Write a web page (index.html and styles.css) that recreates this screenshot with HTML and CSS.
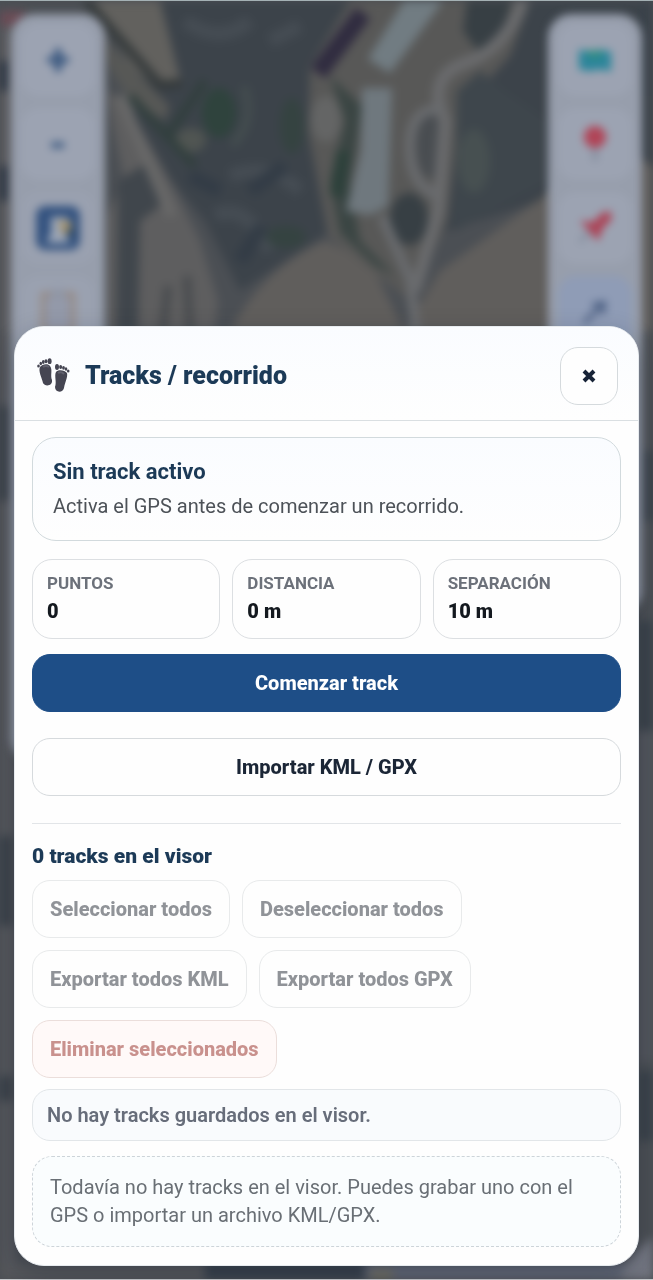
FILE: index.html
```html
<!DOCTYPE html>
<html lang="es">
<head>
<meta charset="utf-8">
<meta name="viewport" content="width=device-width, initial-scale=1">
<title>Tracks / recorrido</title>
<link rel="stylesheet" href="styles.css">
</head>
<body>
<div class="viewer" aria-hidden="true">
  <svg class="map" viewBox="0 0 653 1280" preserveAspectRatio="xMidYMin slice">
    <rect width="653" height="1280" fill="#4b4f54"/>
    <path d="M160 0H653V220L540 200 430 235 410 290 330 230 240 290 205 220 130 130Z" fill="#3c434a"/>
    <path d="M0 20H20V330H0Z" fill="#5b5c60"/>
    <path d="M0 10H25V25H0Z" fill="#6b4c56"/>
    <path d="M0 60H10V90H0ZM0 165H10V200H0Z" fill="#303947"/>
    <path d="M95 0H160L180 78 160 88 130 65Z" fill="#62615e"/>
    <path d="M86 0L160 84 182 82" fill="none" stroke="#353a3b" stroke-width="9"/>
    <path d="M95 30L170 105 165 120 130 98 105 60Z" fill="#575856"/>
    <path d="M105 90L125 100 165 170 200 240 218 300 215 330H105V215L125 180Z" fill="#5e5e5f"/>
    <path d="M118 180L150 160 160 205 140 220 138 330H116Z" fill="#40464c"/>
    <path d="M163 330L168 285M190 330L187 275" stroke="#484b4e" stroke-width="8"/>
    <path d="M185 20Q220 45 250 20M270 40L300 25M230 175Q270 160 300 190M215 215Q245 200 270 250" fill="none" stroke="#454c53" stroke-width="14"/>
    <path d="M190 175L220 190M250 190L285 165M240 260L262 225" stroke="#333c46" stroke-width="14"/>
    <ellipse cx="219" cy="112" rx="17" ry="25" fill="#2f433d"/>
    <ellipse cx="191" cy="139" rx="15" ry="12" fill="#505552"/>
    <path d="M205 80L170 132M130 95L195 165" stroke="#313f3d" stroke-width="8"/>
    <path d="M244 85Q256 122 232 144" fill="none" stroke="#454f50" stroke-width="7"/>
    <ellipse cx="292" cy="125" rx="12" ry="28" fill="#354341"/>
    <ellipse cx="286" cy="236" rx="20" ry="11" fill="#354341"/>
    <path d="M230 330Q265 265 325 240L370 260 404 330Z" fill="#605e5c"/>
    <path d="M404 330L440 270 540 198 620 150 653 165V330Z" fill="#605e5c"/>
    <path d="M350 0L310 65 308 130 328 235 410 300 448 220 460 110 510 55 530 0Z" fill="#585857"/>
    <path d="M330 75L362 105 350 185 360 240 395 275 375 265 340 232 330 180 345 120Z" fill="#3a4543"/>
    <path d="M343 150L336 195" stroke="#2c403a" stroke-width="13"/>
    <path d="M362 87H392L388 205 370 214 346 210 361 150Z" fill="#6f787e"/>
    <path d="M368 58L404 0H443L390 72Z" fill="#717c82"/>
    <path d="M318 72L363 12" stroke="#302c40" stroke-width="18"/>
    <ellipse cx="326" cy="118" rx="15" ry="23" fill="#646565"/>
    <path d="M467 0H512L500 40 478 50 463 30Z" fill="#373f44"/>
    <ellipse cx="431" cy="145" rx="15" ry="32" fill="#494d51"/>
    <ellipse cx="409" cy="218" rx="19" ry="26" fill="#373f44"/>
    <path d="M457 90L480 70 505 90 548 120V180L455 230Z" fill="#3e464c"/>
    <ellipse cx="474" cy="160" rx="16" ry="32" fill="#475051"/>
    <path d="M523 0Q505 48 465 62T445 120L438 210 415 290" fill="none" stroke="#6a6b6d" stroke-width="12"/>
    <path d="M445 108Q410 105 410 145T438 195M382 215L410 278 416 330" fill="none" stroke="#696b6e" stroke-width="10"/>
    <path d="M120 95L150 165 172 215" fill="none" stroke="#686868" stroke-width="11"/>
    <path d="M0 330H16V1280H0Z" fill="#55575c"/>
    <path d="M0 405H12V500H0ZM0 835H12V925H0ZM0 1075H12V1100H0Z" fill="#3a4149"/>
    <path d="M638 450H653V520H638ZM638 620H653V730H638ZM638 1070H653V1140H638ZM640 0H653V95H640Z" fill="#3a424a"/>
    <path d="M638 730H653V1060H638Z" fill="#53565d"/>
    <path d="M0 1262H205V1280H0Z" fill="#55575b"/>
    <path d="M205 1262H365V1280H205Z" fill="#363f4a"/>
    <path d="M365 1262H653V1280H365Z" fill="#616776"/>
    <path d="M370 1268H393V1280H370Z" fill="#716f64"/>
    <path d="M625 1262L653 1235V1280H620Z" fill="#737681"/>
  </svg>
  <div class="rail rail-left">
    <button class="tool tool-sign" type="button" tabindex="-1">+</button>
    <button class="tool tool-sign" type="button" tabindex="-1">-</button>
    <button class="tool tool-plain" type="button" tabindex="-1">
      <svg width="44" height="44" viewBox="0 0 44 44"><rect width="44" height="44" rx="9" fill="#33527f"/><path d="M15 11H32V20L28 25 34 37H10L15 27Z" fill="#9ca6b7"/><path d="M22 14L35 16 36 24 27 30Z" fill="#a5936c"/><path d="M30 26L38 20 37 35Z" fill="#2d4863"/></svg>
    </button>
    <button class="tool tool-plain" type="button" tabindex="-1">
      <svg width="34" height="44" viewBox="0 0 34 44"><rect x="2" y="4" width="30" height="38" fill="#9399a9" stroke="#96877e" stroke-width="4"/><path d="M10 3H24" stroke="#8d94a2" stroke-width="6"/></svg>
    </button>
  </div>
  <div class="rail rail-right">
    <button class="tool" type="button" tabindex="-1">
      <svg width="34" height="26" viewBox="0 0 36 26"><path d="M1 2L12 4 24 2 35 4V25L23 23 12 25 1 23Z" fill="#2b859b"/><path d="M8 3L27 3 23 12 12 11Z" fill="#2f8c82"/></svg>
    </button>
    <button class="tool" type="button" tabindex="-1">
      <svg width="24" height="36" viewBox="0 0 24 36"><path d="M12 18V35" stroke="#7e8797" stroke-width="4"/><circle cx="12" cy="11" r="11" fill="#b04457"/></svg>
    </button>
    <button class="tool" type="button" tabindex="-1">
      <svg width="36" height="36" viewBox="0 0 36 36"><path d="M12 22L3 32" stroke="#7e8797" stroke-width="3"/><path d="M3 11L16 12 25 3 33 1 35 9 26 18 21 31Z" fill="#ab4457"/></svg>
    </button>
    <button class="tool tool-active" type="button" tabindex="-1">
      <svg width="28" height="28" viewBox="0 0 28 28"><path d="M3 25L22 6M11 7L23 5 22 16" fill="none" stroke="#4b5f82" stroke-width="4"/></svg>
    </button>
  </div>
</div>

<main class="stage">
  <section class="dialog" role="dialog" aria-labelledby="dialog-title">
    <header class="dialog-header">
      <svg class="feet" viewBox="0 0 34 36" aria-hidden="true">
        <g fill="#454552">
          <path d="M3 9C5 6 11 5 13 8C16 12 13 17 15 22C16 28 8 29 6 25C5 20 1 13 3 9Z"/>
          <ellipse cx="1.500" cy="8" rx="1.300" ry="1.600"/><ellipse cx="3.800" cy="5.500" rx="1.300" ry="1.700"/><ellipse cx="6.300" cy="4" rx="1.400" ry="1.900"/><ellipse cx="9" cy="3.200" rx="1.500" ry="2"/><ellipse cx="12.600" cy="3.200" rx="2" ry="2.900"/>
          <path d="M19 14C21 11 28 12 30 15C31 19 28 24 27 30C26 35 18 35 18 29C20 24 17 18 19 14Z"/>
          <ellipse cx="20" cy="9" rx="2" ry="2.900"/><ellipse cx="23.600" cy="9" rx="1.500" ry="2"/><ellipse cx="26.500" cy="9.800" rx="1.400" ry="1.900"/><ellipse cx="29" cy="11" rx="1.300" ry="1.700"/><ellipse cx="31.200" cy="13" rx="1.300" ry="1.600"/>
        </g>
        <path d="M6 9Q9 7 12 9M21 15Q24 13 27 16" fill="none" stroke="#60606d" stroke-width="2"/>
      </svg>
      <h1 class="dialog-title" id="dialog-title">Tracks / recorrido</h1>
      <button class="close" type="button" aria-label="Cerrar">
        <svg width="18" height="18" viewBox="0 0 18 18" aria-hidden="true"><path d="M4 4L14 14M14 4L4 14" stroke="#172337" stroke-width="4"/></svg>
      </button>
    </header>
    <div class="dialog-body">
      <div class="status">
        <h2 class="status-title">Sin track activo</h2>
        <p class="status-text">Activa el GPS antes de comenzar un recorrido.</p>
      </div>
      <dl class="stats">
        <div class="stat"><dt>PUNTOS</dt><dd>0</dd></div>
        <div class="stat"><dt>DISTANCIA</dt><dd>0 m</dd></div>
        <div class="stat"><dt>SEPARACIÓN</dt><dd>10 m</dd></div>
      </dl>
      <button class="btn btn-primary" type="button">Comenzar track</button>
      <button class="btn btn-import" type="button">Importar KML / GPX</button>
      <section class="library">
        <h2 class="library-title">0 tracks en el visor</h2>
        <div class="actions">
          <button class="btn" type="button" disabled>Seleccionar todos</button>
          <button class="btn" type="button" disabled>Deseleccionar todos</button>
          <button class="btn" type="button" disabled>Exportar todos KML</button>
          <button class="btn" type="button" disabled>Exportar todos GPX</button>
          <button class="btn btn-danger" type="button" disabled>Eliminar seleccionados</button>
        </div>
        <p class="summary">No hay tracks guardados en el visor.</p>
        <p class="empty">Todavía no hay tracks en el visor. Puedes grabar uno con el GPS o importar un archivo KML/GPX.</p>
      </section>
    </div>
  </section>
</main>
</body>
</html>
```
FILE: styles.css
```css
* {
  box-sizing: border-box;
}

body {
  margin: 0;
  background: #4b4f54;
  color: #172337;
  font-family: Roboto, "Noto Sans", sans-serif;
  font-size: 20px;
  line-height: 28px;
}

h1,
h2,
p,
dl,
dd {
  margin: 0;
}

button {
  font: inherit;
}

/* Map viewer behind the dialog */
.viewer {
  position: fixed;
  inset: 0;
  overflow: hidden;
  border-top: 1px solid #a4b1b4;
  border-bottom: 1px solid #c6c9cc;
}

.map {
  display: block;
  width: 100%;
  height: 100%;
  filter: blur(5px);
}

.rail {
  position: absolute;
  top: 13px;
  display: flex;
  flex-direction: column;
  gap: 12px;
  width: 94px;
  padding: 10px;
  border-radius: 24px;
  background: #979eac;
  filter: blur(4px);
}

.rail-left {
  left: 11px;
  height: 748px;
}

.rail-right {
  right: 11px;
  height: 600px;
}

.tool {
  display: grid;
  place-items: center;
  height: 72px;
  padding: 0;
  border: 0;
  border-radius: 18px;
  background: #9ca3b2;
}

.tool-sign {
  color: #39577f;
  font-size: 44px;
  font-weight: 900;
}

.tool-plain {
  background: #9aa1b0;
}

.tool-active {
  background: #8f9cb6;
}

/* Dialog */
.stage {
  position: relative;
  display: flex;
  flex-direction: column;
  justify-content: flex-end;
  min-height: 100vh;
  padding: 14px;
}

.dialog {
  overflow: hidden;
  border: 1px solid #e7ebef;
  border-radius: 30px;
  background: #fefefe;
  box-shadow: 0 8px 24px rgba(15, 23, 42, 0.25);
}

.dialog-header {
  display: flex;
  align-items: center;
  gap: 14px;
  padding: 20px 20px 15px 22px;
  border-bottom: 1px solid #dadfe2;
  background: linear-gradient(#fafcff, #fefefe);
}

.feet {
  width: 34px;
  height: 36px;
}

.dialog-title {
  flex: 1;
  color: #1c3a57;
  font-size: 25px;
  font-weight: 900;
  line-height: 32px;
}

.close {
  display: grid;
  place-items: center;
  width: 58px;
  height: 58px;
  padding: 0;
  border: 1px solid #d5dadd;
  border-radius: 18px;
  background: #fefefe;
}

.dialog-body {
  display: flex;
  flex-direction: column;
  padding: 16px 17px 18px;
}

.status {
  padding: 20px;
  border: 1px solid #d2dadd;
  border-radius: 24px;
  background: linear-gradient(#fafcff, #fefefe);
}

.status-title {
  margin-bottom: 6px;
  color: #1c3a57;
  font-size: 22px;
  font-weight: 700;
  line-height: 28px;
}

.status-text {
  color: #4d5258;
}

.stats {
  display: grid;
  grid-template-columns: repeat(3, 1fr);
  gap: 12px;
  margin-top: 18px;
}

.stat {
  padding: 9px 14px 13px;
  border: 1px solid #dcdfe2;
  border-radius: 20px;
}

.stat dt {
  color: #6c717a;
  font-size: 17px;
  font-weight: 700;
}

.stat dd {
  color: #14191f;
  font-weight: 900;
}

.btn {
  height: 58px;
  padding: 0 17px;
  border: 1px solid #d6dadd;
  border-radius: 18px;
  background: #fefefe;
  color: #1b2636;
  font-weight: 800;
}

.btn:disabled {
  border-color: #e8eaeb;
  color: #909398;
}

.btn-primary {
  margin-top: 15px;
  border-color: #1e4e87;
  background: #1e4e87;
  color: #fff;
}

.btn-import {
  margin-top: 26px;
}

.library {
  margin-top: 27px;
  padding-top: 18px;
  border-top: 1px solid #e2e5e8;
}

.library-title {
  color: #1c3a57;
  font-size: 21px;
  font-weight: 900;
  line-height: 28px;
}

.actions {
  display: flex;
  flex-wrap: wrap;
  gap: 12px;
  margin-top: 10px;
}

.btn-danger:disabled {
  border-color: #ebdedb;
  background: #fff9f8;
  color: #c9918d;
}

.summary {
  margin-top: 11px;
  padding: 11px 14px;
  border: 1px solid #e2e6e9;
  border-radius: 18px;
  background: #f9fbfd;
  color: #676d7a;
  font-weight: 600;
}

.empty {
  margin-top: 15px;
  padding: 16px 17px 17px;
  border: 1px dashed #cdd4d9;
  border-radius: 20px;
  background: #fafdfe;
  color: #696f75;
}
```
